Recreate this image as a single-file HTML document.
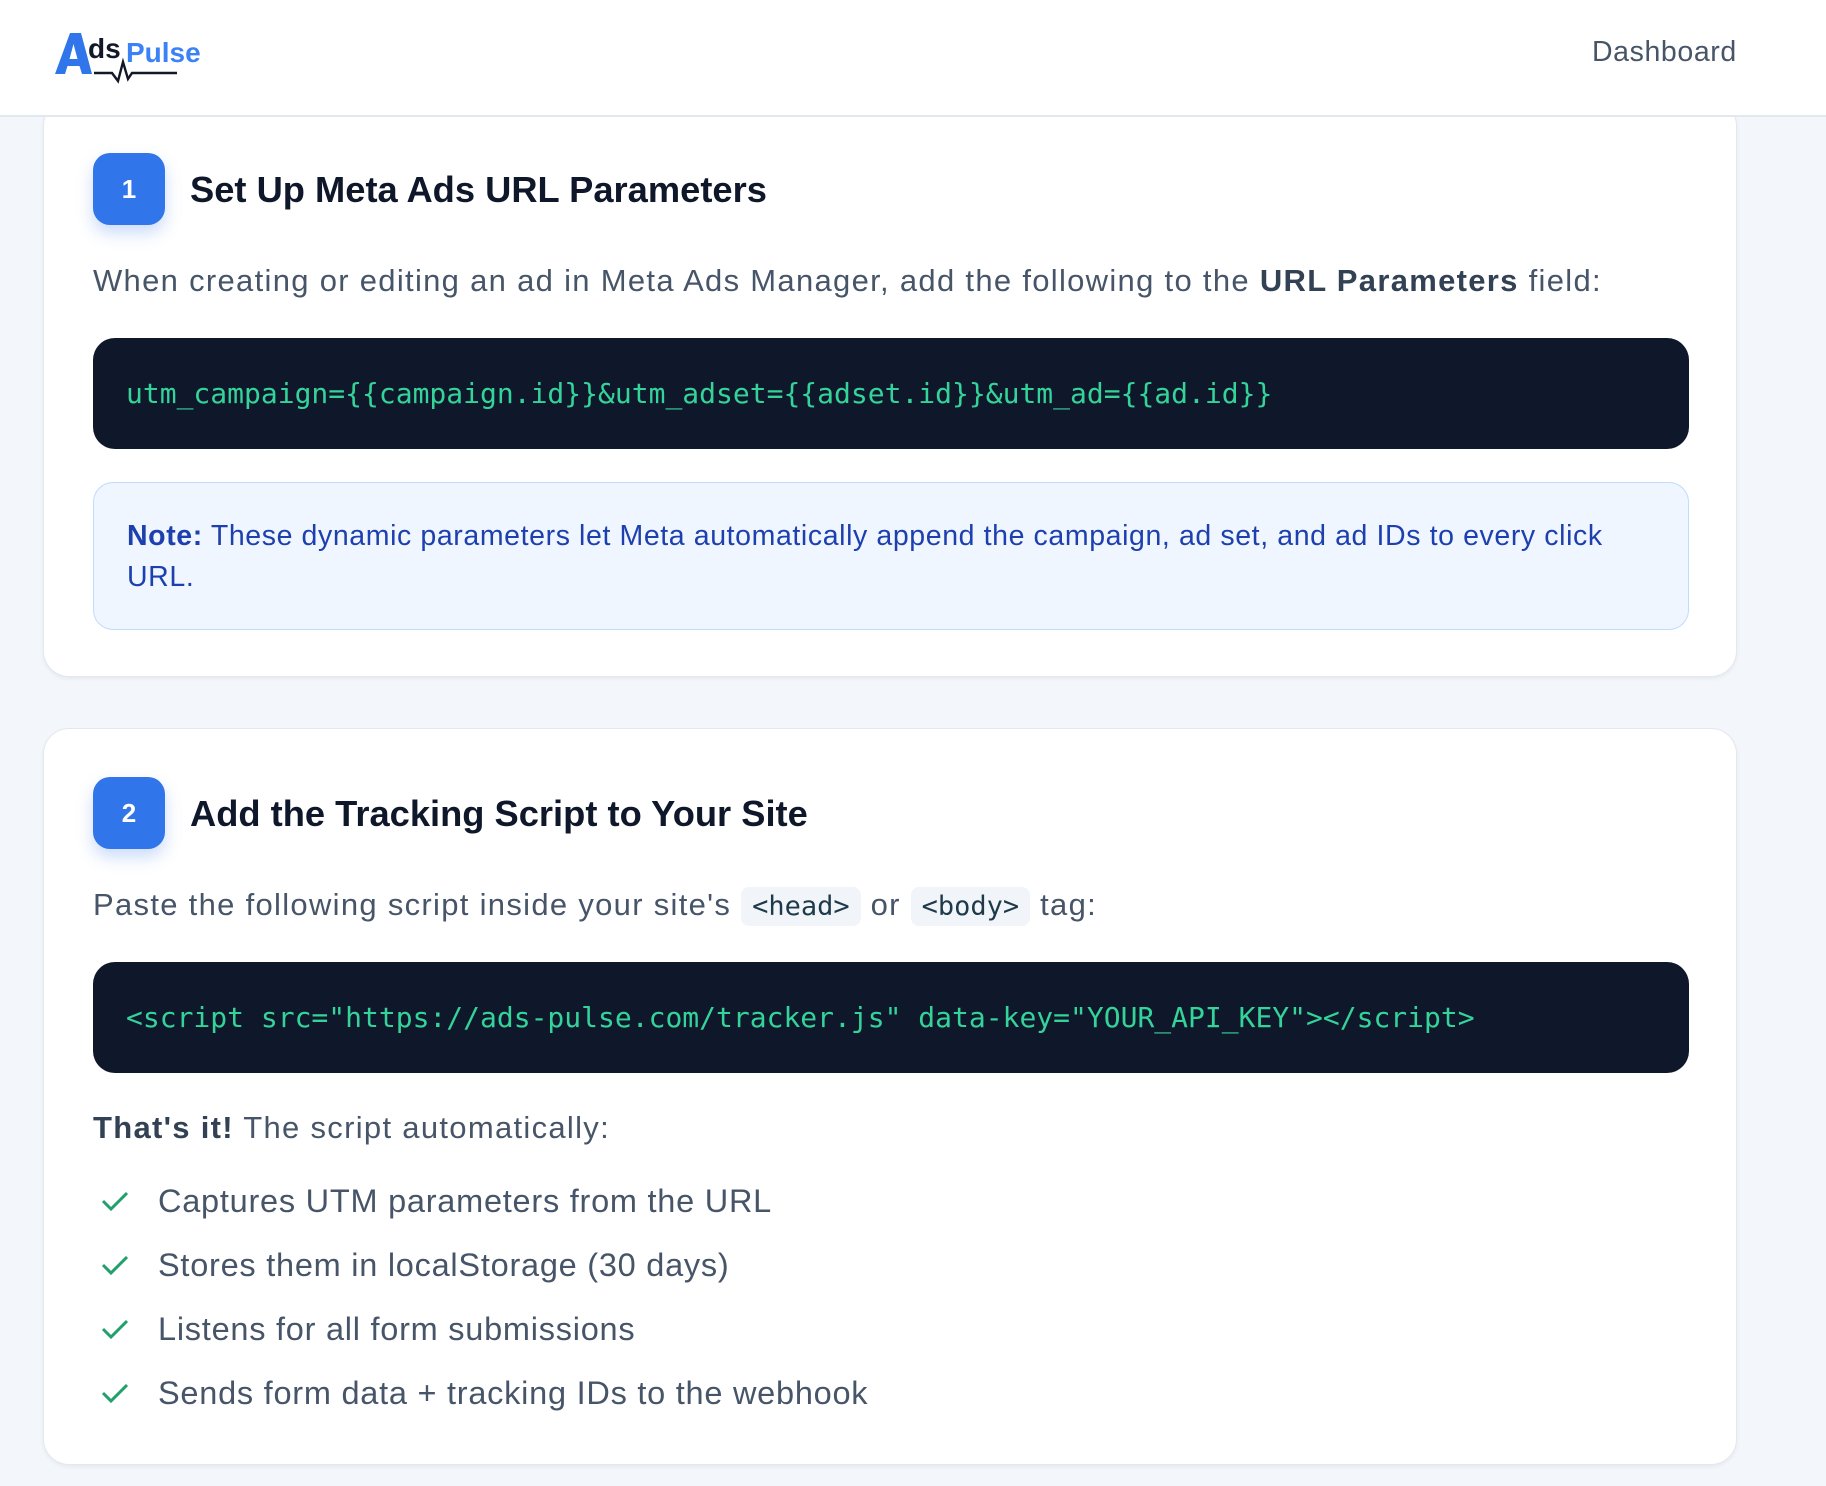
<!DOCTYPE html>
<html><head><meta charset="utf-8"><style>
*{box-sizing:border-box;margin:0;padding:0}
body{width:1826px;height:1486px;overflow:hidden;background:#f3f6fa;font-family:"Liberation Sans",Arial,sans-serif;color:#475569;position:relative}
.hdr{position:absolute;left:0;top:0;width:1826px;height:117px;background:#fff;border-bottom:2px solid #e2e8f0;z-index:2}
.dash{position:absolute;left:1592px;top:36px;font-size:28.5px;letter-spacing:0.6px;color:#475569}
.card{position:absolute;left:43px;width:1694px;background:#fff;border:1.5px solid #e2e8f0;border-radius:26px;box-shadow:0 2px 4px rgba(15,23,42,.05)}
.badge{position:absolute;left:49px;width:72px;height:72px;border-radius:17px;background:#3175eb;color:#fff;font-weight:bold;font-size:26px;display:flex;align-items:center;justify-content:center;box-shadow:0 8px 16px rgba(49,117,235,.25)}
.title{position:absolute;left:146px;font-size:36.3px;font-weight:bold;color:#0f172a;white-space:nowrap}
.p{position:absolute;left:49px;font-size:31px;letter-spacing:1.3px;white-space:nowrap;color:#475569}
.p b{color:#334155}
.code{position:absolute;left:49px;width:1596px;height:111px;background:#0f172a;border-radius:22px;color:#34d399;font-family:"DejaVu Sans Mono","Liberation Mono",monospace;font-size:28px;padding-left:33px;line-height:111px;white-space:nowrap}
.note{position:absolute;left:49px;width:1596px;height:148px;background:#eff6ff;border:1.5px solid #bfdbfe;border-radius:20px;padding:33px 33px;font-size:28.5px;letter-spacing:0.6px;line-height:41px;color:#1e40af}
.ic{background:#f1f5f9;border-radius:8px;font-family:"DejaVu Sans Mono",monospace;font-size:27px;letter-spacing:0;color:#1e3a4a;padding:4px 11px}
.li{position:absolute;left:114px;font-size:32.5px;letter-spacing:0.75px;color:#475569;white-space:nowrap}
.li svg{position:absolute;left:-57px;top:7px}
</style></head><body>
<div class="hdr">
<svg style="position:absolute;left:50px;top:28px" width="160" height="58" viewBox="0 0 160 58">
<path fill-rule="evenodd" d="M5 46 L20 5 L31 5 L42 46 L32 46 L29.5 38 L17.5 38 L15 46 Z M19.5 31 L27.5 31 L23.5 16 Z" fill="#3175eb"/>
<text x="38" y="30" font-family="Liberation Sans,Arial" font-weight="bold" font-size="28" fill="#111827">ds</text>
<text x="76" y="34" font-family="Liberation Sans,Arial" font-weight="bold" font-size="28" fill="#3b82f6">Pulse</text>
<path d="M44 45 L62 45 L68 53 L73 34 L78 51 L82 45 L127 45" fill="none" stroke="#111827" stroke-width="2.4"/>
</svg>
<div class="dash">Dashboard</div>
</div>

<div class="card" style="top:100px;height:577px">
<div class="badge" style="top:52px">1</div>
<div class="title" style="top:68px">Set Up Meta Ads URL Parameters</div>
<div class="p" style="top:162px">When creating or editing an ad in Meta Ads Manager, add the following to the <b>URL Parameters</b> field:</div>
<div class="code" style="top:237px">utm_campaign={{campaign.id}}&amp;utm_adset={{adset.id}}&amp;utm_ad={{ad.id}}</div>
<div class="note" style="top:381px"><b>Note:</b> These dynamic parameters let Meta automatically append the campaign, ad set, and ad IDs to every click URL.</div>
</div>

<div class="card" style="top:728px;height:737px">
<div class="badge" style="top:48px">2</div>
<div class="title" style="top:64px">Add the Tracking Script to Your Site</div>
<div class="p" style="top:158px">Paste the following script inside your site's <span class="ic">&lt;head&gt;</span> or <span class="ic">&lt;body&gt;</span> tag:</div>
<div class="code" style="top:233px">&lt;script src="https://ads-pulse.com/tracker.js" data-key="YOUR_API_KEY"&gt;&lt;/script&gt;</div>
<div class="p" style="top:381px"><b>That's it!</b> The script automatically:</div>
<div class="li" style="top:454px"><svg width="28" height="22" viewBox="0 0 28 22"><path d="M2 11 L10 19 L26 3" fill="none" stroke="#22a06b" stroke-width="3"/></svg>Captures UTM parameters from the URL</div>
<div class="li" style="top:518px"><svg width="28" height="22" viewBox="0 0 28 22"><path d="M2 11 L10 19 L26 3" fill="none" stroke="#22a06b" stroke-width="3"/></svg>Stores them in localStorage (30 days)</div>
<div class="li" style="top:582px"><svg width="28" height="22" viewBox="0 0 28 22"><path d="M2 11 L10 19 L26 3" fill="none" stroke="#22a06b" stroke-width="3"/></svg>Listens for all form submissions</div>
<div class="li" style="top:646px"><svg width="28" height="22" viewBox="0 0 28 22"><path d="M2 11 L10 19 L26 3" fill="none" stroke="#22a06b" stroke-width="3"/></svg>Sends form data + tracking IDs to the webhook</div>
</div>
</body></html>
